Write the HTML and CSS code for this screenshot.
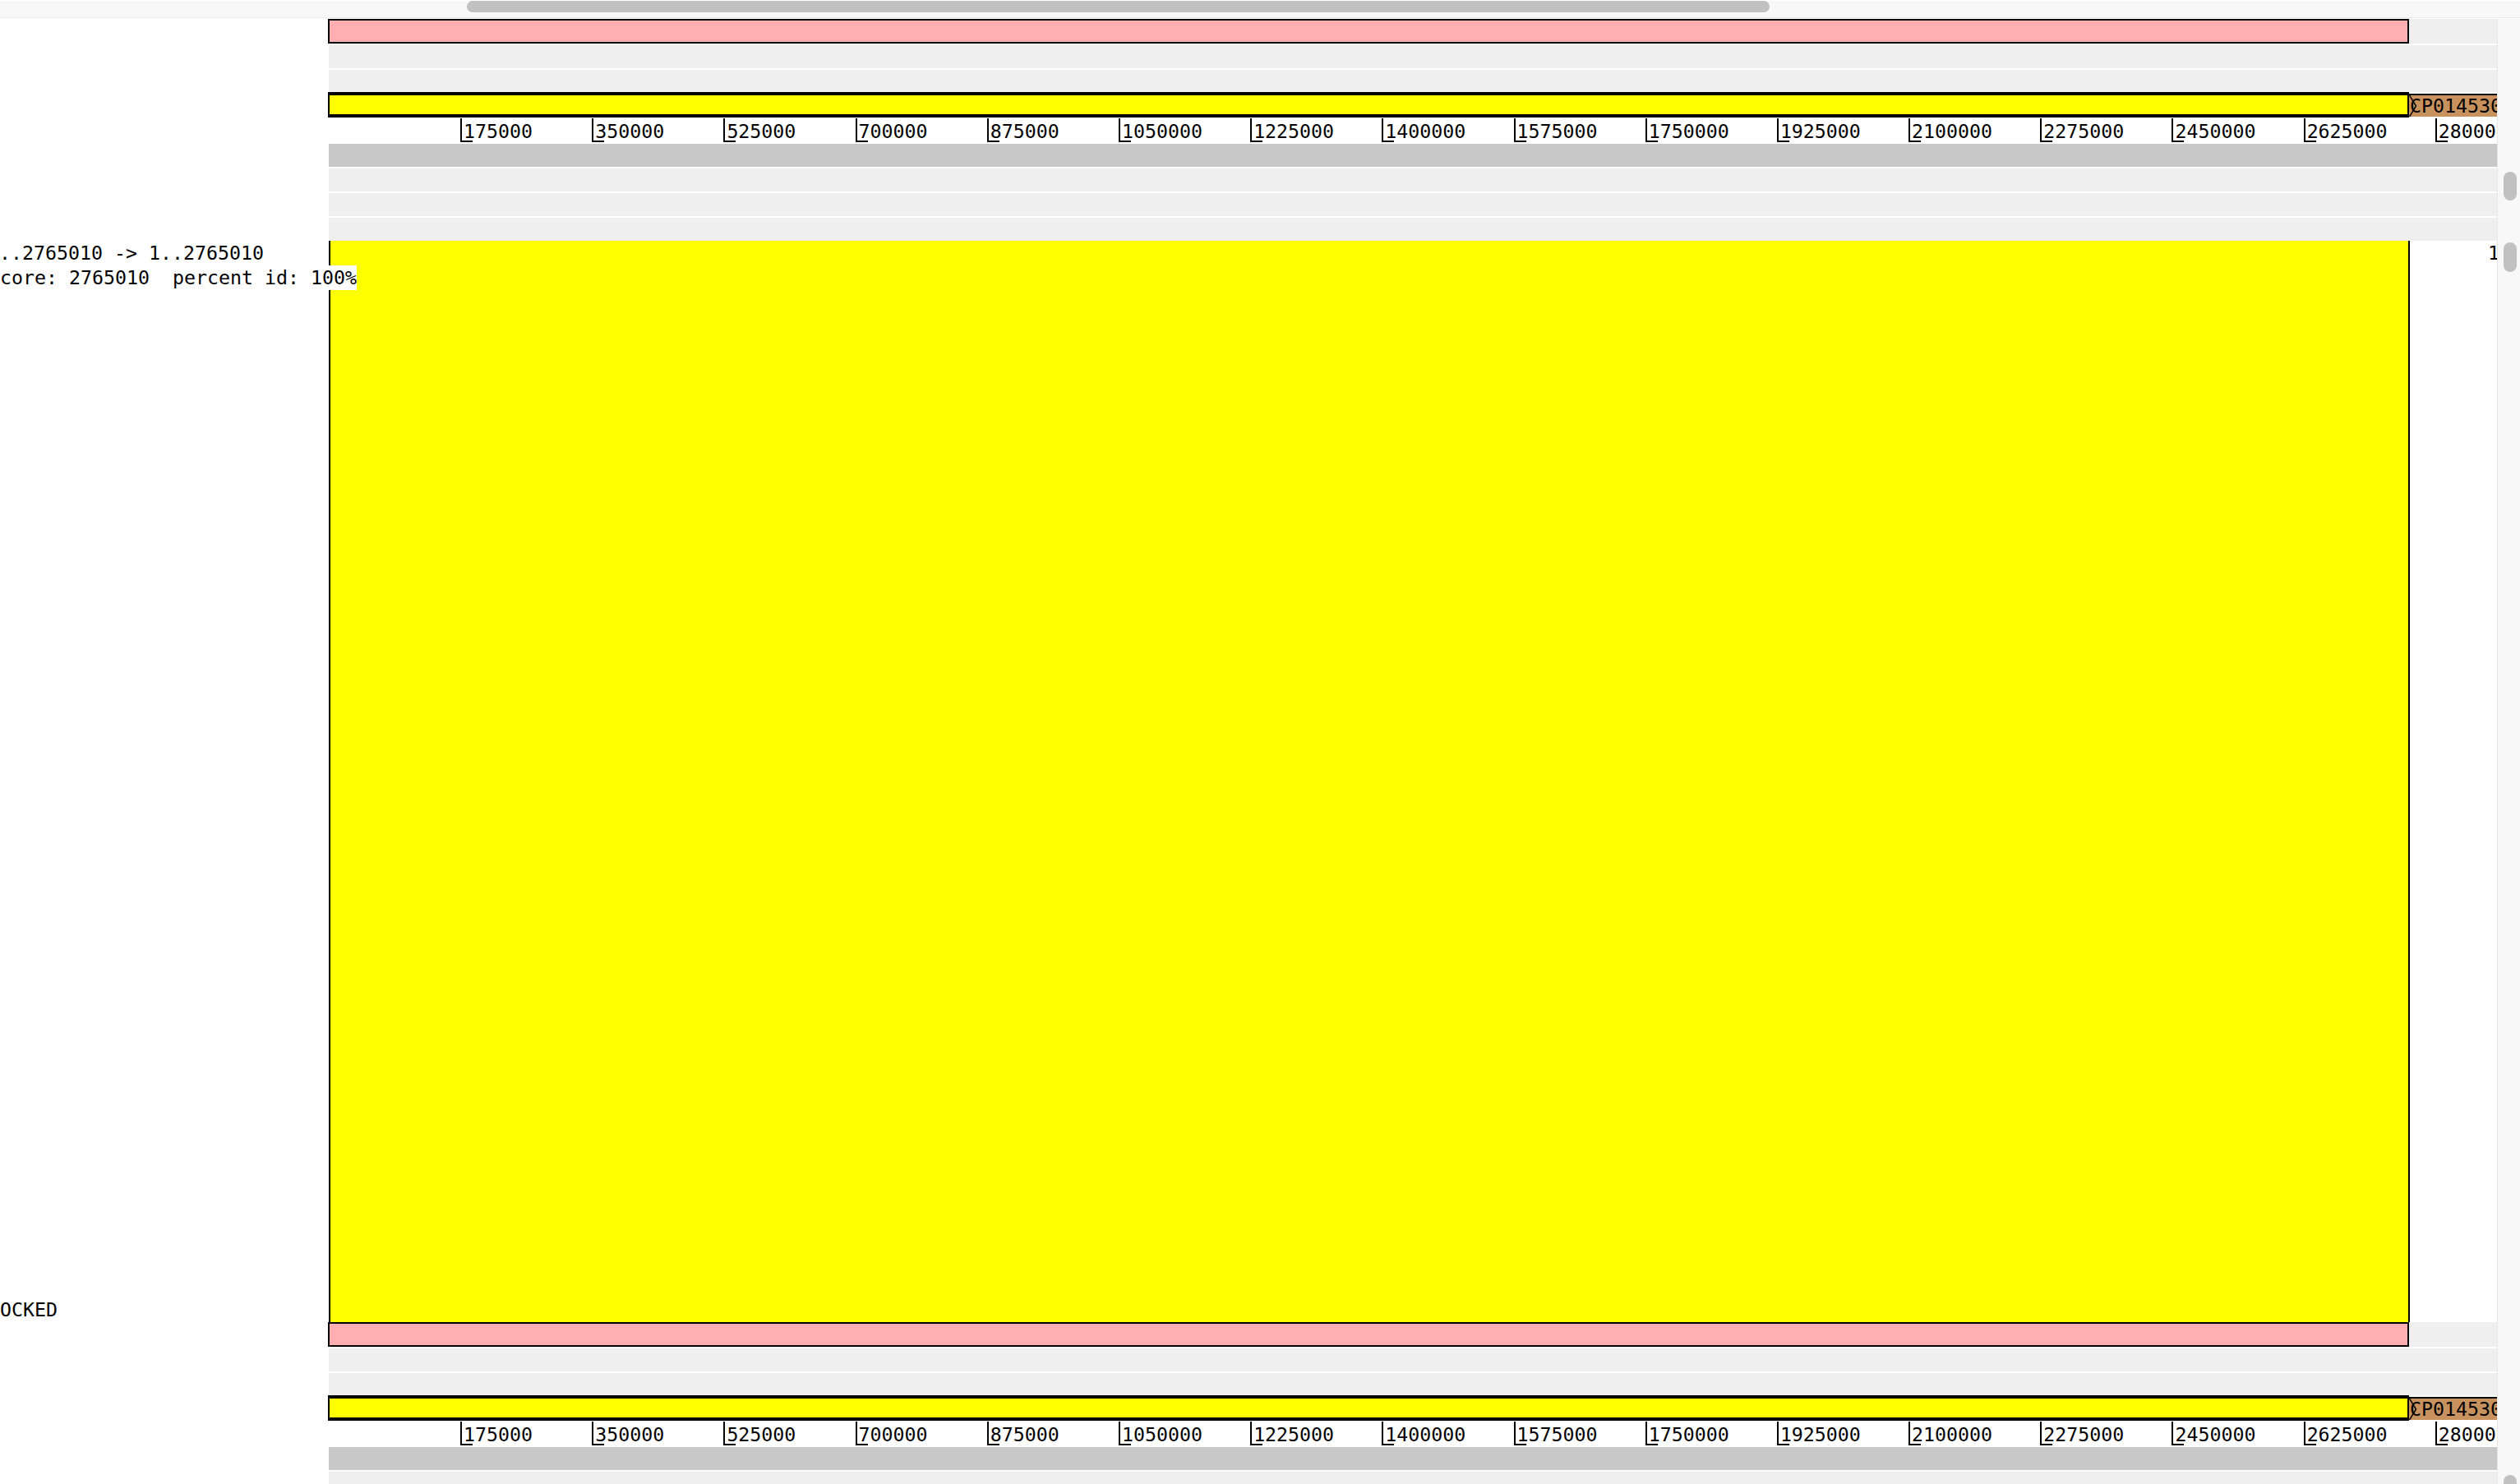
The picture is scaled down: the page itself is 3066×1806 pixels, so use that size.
FILE: index.html
```html
<!DOCTYPE html>
<html>
<head>
<meta charset="utf-8">
<title>Comparison view</title>
<link rel="stylesheet" href="styles.css">
</head>
<body>
<div class="hscroll"><div class="hthumb"></div></div>

<div class="panel panel-top">
  <div class="labels"></div>
  <div class="tracks">
    <div class="row row-pink gap"><div class="bar-pink"></div></div>
    <div class="row row-grey gap"></div>
    <div class="row row-grey row-short"></div>
    <div class="row row-seq">
      <div class="bar-seq"></div>
      <div class="contig"><svg class="contig-arrow" width="10" height="26" viewBox="0 0 10 26"><polyline points="0.5,0 8.5,13 0.5,26" fill="none" stroke="#000" stroke-width="1.5"/></svg><span class="contig-name">CP014530</span></div>
    </div>
    <div class="row row-ruler">
      <div class="tick">175000</div><div class="tick">350000</div><div class="tick">525000</div><div class="tick">700000</div><div class="tick">875000</div><div class="tick">1050000</div><div class="tick">1225000</div><div class="tick">1400000</div><div class="tick">1575000</div><div class="tick">1750000</div><div class="tick">1925000</div><div class="tick">2100000</div><div class="tick">2275000</div><div class="tick">2450000</div><div class="tick">2625000</div><div class="tick">2800000</div>
    </div>
    <div class="row row-dark gap"></div>
    <div class="row row-grey gap"></div>
    <div class="row row-grey gap"></div>
    <div class="row row-grey"></div>
  </div>
  <div class="vscroll"><div class="vthumb"></div></div>
</div>

<div class="panel panel-match">
  <div class="labels labels-match">
    <div class="lbl-group">
      <div class="lbl lbl-range">1..2765010 -&gt; 1..2765010</div>
      <div class="lbl">score: 2765010  percent id: 100%</div>
    </div>
    <div class="lbl">LOCKED</div>
  </div>
  <div class="tracks match-area">
    <div class="match-block"></div>
    <div class="match-side"><span class="match-count">1</span></div>
  </div>
  <div class="vscroll"><div class="vthumb vthumb-top"></div></div>
</div>

<div class="panel panel-bottom">
  <div class="labels"></div>
  <div class="tracks">
    <div class="row row-pink gap"><div class="bar-pink"></div></div>
    <div class="row row-grey gap"></div>
    <div class="row row-grey row-short"></div>
    <div class="row row-seq">
      <div class="bar-seq"></div>
      <div class="contig"><svg class="contig-arrow" width="10" height="26" viewBox="0 0 10 26"><polyline points="0.5,0 8.5,13 0.5,26" fill="none" stroke="#000" stroke-width="1.5"/></svg><span class="contig-name">CP014530</span></div>
    </div>
    <div class="row row-ruler">
      <div class="tick">175000</div><div class="tick">350000</div><div class="tick">525000</div><div class="tick">700000</div><div class="tick">875000</div><div class="tick">1050000</div><div class="tick">1225000</div><div class="tick">1400000</div><div class="tick">1575000</div><div class="tick">1750000</div><div class="tick">1925000</div><div class="tick">2100000</div><div class="tick">2275000</div><div class="tick">2450000</div><div class="tick">2625000</div><div class="tick">2800000</div>
    </div>
    <div class="row row-dark gap"></div>
    <div class="row row-grey gap"></div>
    <div class="row row-grey gap"></div>
    <div class="row row-grey"></div>
  </div>
  <div class="vscroll"><div class="vthumb"></div></div>
</div>
</body>
</html>
```

FILE: styles.css
```css
html, body {
  margin: 0;
  padding: 0;
}
body {
  width: 3066px;
  height: 1806px;
  overflow: hidden;
  background: #ffffff;
  color: #000000;
  font-family: "DejaVu Sans Mono", "Liberation Mono", monospace;
  font-size: 23.25px;
}

/* top horizontal scrollbar */
.hscroll {
  height: 20px;
  background: #f8f8f8;
  border-bottom: 1px solid #ebebeb;
  margin-bottom: 1px;
  padding-left: 568px;
}
.hthumb {
  width: 1585px;
  height: 14px;
  margin-top: 1px;
  border-radius: 7px;
  background: #c1c1c1;
}

/* panels */
.panel {
  display: flex;
}
.panel-top { height: 270px; }
.panel-match { height: 1316px; }
.panel-bottom { height: 198px; }

.labels {
  flex: 0 0 399px;
  width: 399px;
}
.tracks {
  flex: 0 0 2639px;
  width: 2639px;
  overflow: hidden;
}
.vscroll {
  flex: 0 0 28px;
  box-sizing: border-box;
  border-left: 1px solid #e6e6e6;
  background: #f8f8f8;
  padding-left: 7px;
}
.vthumb {
  width: 16px;
  height: 35px;
  margin-top: 186px;
  border-radius: 8px;
  background: #c1c1c1;
}
.vthumb-top {
  margin-top: 2px;
  height: 36px;
}

/* track rows */
.gap { margin-bottom: 2px; }
.row-pink {
  height: 30px;
  background: #efefef;
}
.bar-pink {
  width: 2532px;
  height: 30px;
  box-sizing: border-box;
  border: 2px solid #000;
  background: #ffafaf;
}
.row-grey {
  height: 28px;
  margin-left: 1px;
  background: #efefef;
}
.row-short { height: 27px; }
.row-dark {
  height: 28px;
  margin-left: 1px;
  background: #c8c8c8;
}
.row-seq {
  height: 31px;
  display: flex;
}
.bar-seq {
  flex: 0 0 2532px;
  box-sizing: border-box;
  border-style: solid;
  border-color: #000;
  border-width: 4px 2px;
  background: #ffff00;
}
.contig {
  flex: 1 0 auto;
  position: relative;
  margin-top: 2px;
  height: 28px;
  box-sizing: border-box;
  border-top: 2px solid #000;
  background: #c8925f;
  padding-left: 1px;
  line-height: 26px;
  white-space: nowrap;
}
.contig-arrow {
  position: absolute;
  left: 0;
  top: 0;
}
.contig-name {
  position: relative;
}

/* ruler */
.row-ruler {
  height: 32px;
  display: flex;
  padding-left: 161px;
  background: #fff;
}
.tick {
  flex: 0 0 160.2px;
  box-sizing: border-box;
  height: 29px;
  margin-top: 1px;
  border-left: 2px solid #000;
  padding-left: 2px;
  line-height: 32px;
  white-space: nowrap;
  background: linear-gradient(#000, #000) left bottom / 13px 2px no-repeat;
}

/* match panel */
.match-area {
  display: flex;
}
.match-block {
  flex: 0 0 2532px;
  margin-left: 1px;
  box-sizing: border-box;
  border-left: 2px solid #000;
  border-right: 2px solid #000;
  background: #ffff00;
}
.match-side {
  flex: 1 0 auto;
  text-align: right;
  line-height: 30px;
  background: #fff;
}
.match-count {
  margin-right: -3px;
}

.labels-match {
  position: relative;
  z-index: 1;
  display: flex;
  flex-direction: column;
  justify-content: space-between;
  line-height: 30px;
  white-space: pre;
}
.lbl-group {
  display: flex;
  flex-direction: column;
  align-items: flex-start;
}
.lbl {
  align-self: flex-start;
  background: #fff;
  margin-left: -14px;
}
.lbl-range {
  margin-left: -15px;
}
```
